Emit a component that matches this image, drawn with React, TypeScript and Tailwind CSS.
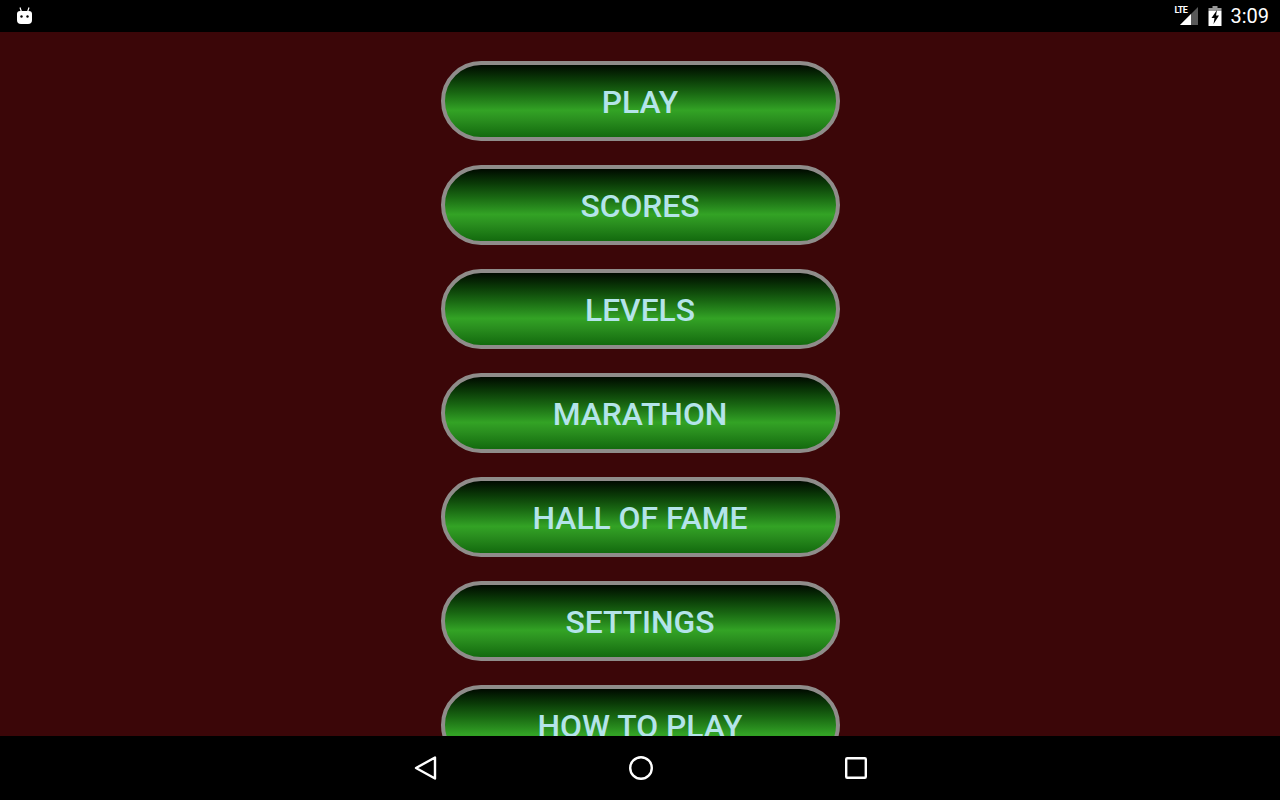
const MENU = ["PLAY", "SCORES", "LEVELS", "MARATHON", "HALL OF FAME", "SETTINGS", "HOW TO PLAY"];

function MenuButton({ label }: { label: string }) {
  return (
    <button
      type="button"
      className="h-20 w-[399px] shrink-0 rounded-[40px] border-4 border-[#8f8c8a] bg-[linear-gradient(180deg,#000a00_0%,#0a3a07_20%,#1a6a13_40%,#2a8f1f_55%,#33a325_63%,#2a8f1f_76%,#136a0e_100%)] pt-1 text-center font-['Roboto',sans-serif] text-[31.8px] font-medium leading-none text-[#b4e4ea]"
    >
      {label}
    </button>
  );
}

export default function App() {
  return (
    <div className="flex h-[800px] w-[1280px] flex-col overflow-hidden bg-black font-['Roboto',sans-serif]">
      {/* Status bar */}
      <div className="flex h-8 shrink-0 items-center justify-between bg-black pl-4 pr-[11px]">
        <svg width="17" height="18" viewBox="0 0 17 18" fill="none">
          <path d="M4 0.5 L5.5 5 M13 0.5 L11.5 5" stroke="#fff" strokeWidth="1.2" />
          <path d="M1 7 Q1 4 4 4 H13 Q16 4 16 7 V13 Q16 17 12 17 H5 Q1 17 1 13 Z" fill="#fff" />
          <circle cx="5.5" cy="9.5" r="1.2" fill="#000" />
          <circle cx="11.5" cy="9.5" r="1.2" fill="#000" />
        </svg>
        <div className="flex items-center">
          <div className="relative h-[20px] w-6">
            <svg width="24" height="20" viewBox="0 0 24 20" className="absolute left-0 top-0">
              <path d="M23 1 V19 H5 Z" fill="#fff" fillOpacity="0.35" />
              <path d="M16 8 V19 H5 Z" fill="#fff" />
            </svg>
            <span className="absolute -left-[1px] top-[-1px] text-[9px] font-bold leading-[11px] tracking-[-0.5px] text-white">
              LTE
            </span>
          </div>
          <svg width="14" height="20" viewBox="0 0 14 20" className="ml-[9px]">
            <path d="M4.5 0 H9.5 V2 H13.5 V5 H0.5 V2 H4.5 Z" fill="#fff" fillOpacity="0.6" />
            <path d="M0.5 5 H13.5 V20 H0.5 Z" fill="#fff" />
            <path d="M9 4 L3.5 12 H6.5 L5.5 18 L11 9.5 H8 Z" fill="#000" />
          </svg>
          <span className="ml-2 text-[20px] leading-none text-white">3:09</span>
        </div>
      </div>

      {/* Menu */}
      <div className="flex min-h-0 flex-1 flex-col items-center gap-6 overflow-hidden bg-[#3b0608] pt-[29px]">
        {MENU.map((label) => (
          <MenuButton key={label} label={label} />
        ))}
      </div>

      {/* Navigation bar */}
      <div className="flex h-16 shrink-0 items-center justify-center gap-[191px] bg-black pl-[1px]">
        <svg width="24" height="28" viewBox="0 0 24 28" fill="none" className="-ml-[2px]">
          <path d="M22 3.5 V24.5 L3 14 Z" stroke="#fff" strokeWidth="2.4" strokeLinejoin="round" />
        </svg>
        <svg width="26" height="26" viewBox="0 0 26 26" fill="none">
          <circle cx="13" cy="13" r="10.8" stroke="#fff" strokeWidth="2.4" />
        </svg>
        <svg width="22" height="22" viewBox="0 0 22 22" fill="none">
          <rect x="1.2" y="1.2" width="19.6" height="19.6" rx="1" stroke="#fff" strokeWidth="2.4" />
        </svg>
      </div>
    </div>
  );
}
